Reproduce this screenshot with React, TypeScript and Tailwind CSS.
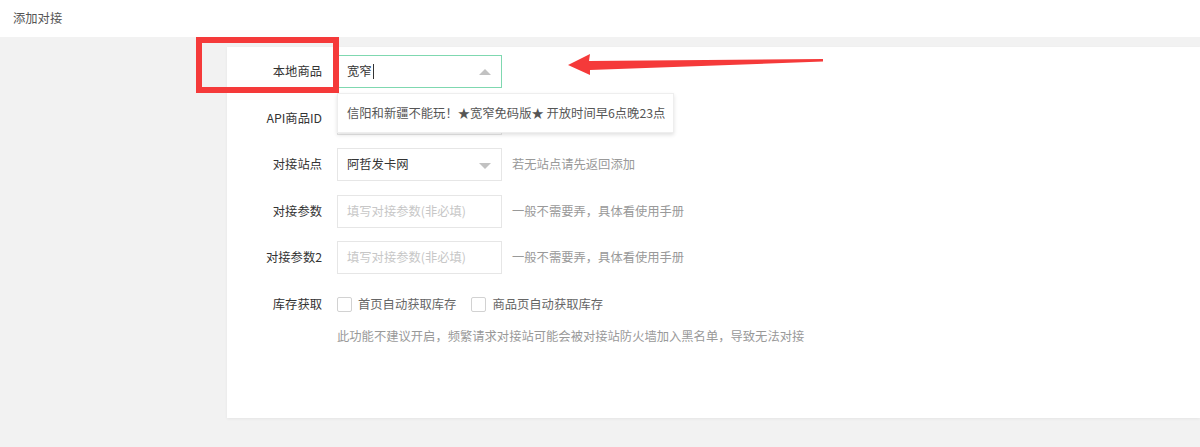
import React from "react";

const font = { fontFamily: '"Microsoft YaHei", "Noto Sans CJK SC", "Noto Sans", sans-serif' };

function Caret({ up }: { up?: boolean }) {
  return up ? (
    <span className="absolute right-[10px] top-[13px] h-0 w-0 border-x-[6px] border-b-[6px] border-x-transparent border-b-[#c2c2c2]" />
  ) : (
    <span className="absolute right-[10px] top-[14px] h-0 w-0 border-x-[6px] border-t-[6px] border-x-transparent border-t-[#c2c2c2]" />
  );
}

function Row({ label, children }: { label: string; children: React.ReactNode }) {
  return (
    <div className="flex h-[33px] items-center">
      <label className="w-[110px] shrink-0 pr-[15px] text-right text-[12.3px] text-[#333]">{label}</label>
      {children}
    </div>
  );
}

function Help({ children }: { children: React.ReactNode }) {
  return <span className="ml-[10px] text-[12.3px] text-[#999]">{children}</span>;
}

function Check({ text }: { text: string }) {
  return (
    <span className="mr-[15px] flex items-center">
      <span className="h-[15px] w-[15px] rounded-[2px] border border-[#d2d2d2] bg-white" />
      <span className="ml-[6px] text-[12.3px] text-[#666]">{text}</span>
    </span>
  );
}

export default function App() {
  return (
    <div className="relative h-[447px] w-full overflow-hidden bg-[#f2f2f2]" style={font}>
      <div className="flex h-[37px] items-center bg-white pl-[13px] text-[12.3px] text-[#555]">添加对接</div>

      <div className="mt-[10px] flex">
        <div className="w-[227px] shrink-0" />
        <div className="h-[371px] flex-1 bg-white pt-[8px] shadow-[0_1px_3px_rgba(0,0,0,0.06)]">
          <div className="flex flex-col gap-[13.5px]">
            <Row label="本地商品">
              <div className="relative">
                <div className="relative flex h-[33px] w-[165px] items-center border border-[#7fd8b0] bg-white pl-[9px] text-[12.3px] text-[#333]">
                  宽窄<span className="ml-px h-[15px] w-px bg-[#333]" />
                  <Caret up />
                </div>
                <div className="absolute left-0 top-[38px] z-10 flex h-[40px] items-center whitespace-nowrap border border-[#eee] bg-white pl-[9px] pr-[8px] text-[12.3px] text-[#555] shadow-[0_2px_4px_rgba(0,0,0,0.12)]">
                  信阳和新疆不能玩！★宽窄免码版★ 开放时间早6点晚23点
                </div>
              </div>
            </Row>
            <Row label="API商品ID">
              <div className="h-[33px] w-[165px] border border-[#e6e6e6]" />
            </Row>
            <Row label="对接站点">
              <div className="relative flex h-[33px] w-[165px] items-center border border-[#e6e6e6] pl-[9px] text-[12.3px] text-[#333]">
                阿哲发卡网
                <Caret />
              </div>
              <Help>若无站点请先返回添加</Help>
            </Row>
            <Row label="对接参数">
              <div className="flex h-[33px] w-[165px] items-center border border-[#e6e6e6] pl-[9px] text-[12.3px] text-[#c7c7c7]">填写对接参数(非必填)</div>
              <Help>一般不需要弄，具体看使用手册</Help>
            </Row>
            <Row label="对接参数2">
              <div className="flex h-[33px] w-[165px] items-center border border-[#e6e6e6] pl-[9px] text-[12.3px] text-[#c7c7c7]">填写对接参数(非必填)</div>
              <Help>一般不需要弄，具体看使用手册</Help>
            </Row>
            <Row label="库存获取">
              <Check text="首页自动获取库存" />
              <Check text="商品页自动获取库存" />
            </Row>
          </div>
          <div className="mt-[6px] pl-[110px] text-[12.3px] text-[#999]">
            此功能不建议开启，频繁请求对接站可能会被对接站防火墙加入黑名单，导致无法对接
          </div>
        </div>
      </div>

      {/* annotations */}
      <div className="absolute left-[196px] top-[37px] h-[56px] w-[143px] border-[6px] border-[#f53a3a]" />
      <svg className="absolute left-0 top-0" width="1200" height="447" viewBox="0 0 1200 447">
        <polygon points="568,65 590,54 589,61 823,59 823,61.5 590,70 590,75" fill="#f53a3a" />
      </svg>
    </div>
  );
}
